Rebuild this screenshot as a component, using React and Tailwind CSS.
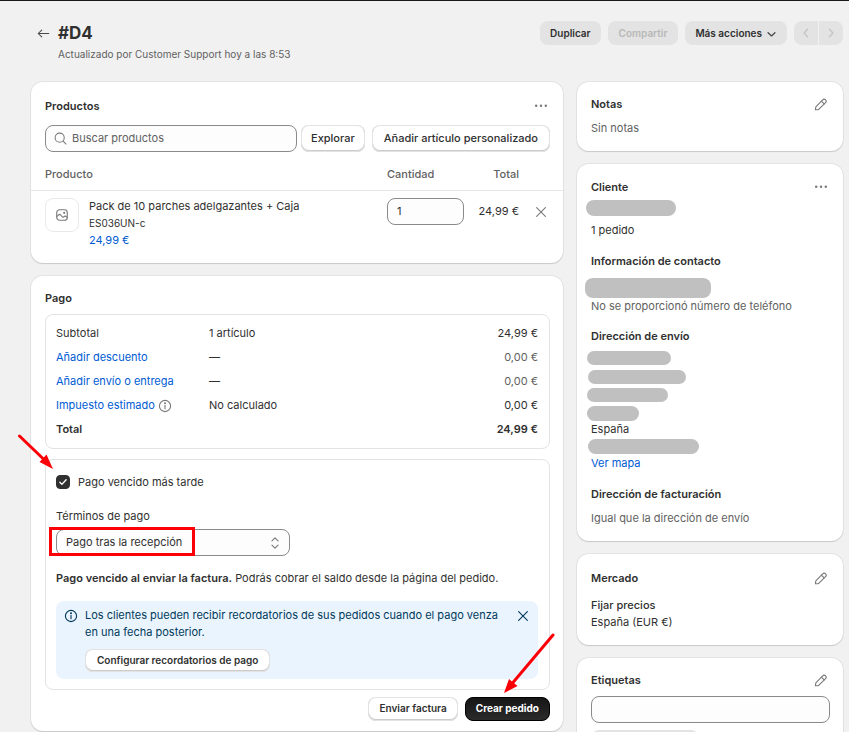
import { useState } from 'react';
import clsx from 'clsx';

const paymentRows = [
  { label: 'Subtotal', detail: '1 artículo', amount: '24,99 €' },
  { label: 'Añadir descuento', detail: '—', amount: '0,00 €', link: true, muted: true },
  { label: 'Añadir envío o entrega', detail: '—', amount: '0,00 €', link: true, muted: true },
  { label: 'Impuesto estimado', detail: 'No calculado', amount: '0,00 €', link: true, info: true },
  { label: 'Total', detail: '', amount: '24,99 €', strong: true },
];

const Icon = ({ className, children, viewBox = '0 0 16 16' }) => (
  <svg
    className={clsx('shrink-0', className)}
    viewBox={viewBox}
    fill="none"
    stroke="currentColor"
    strokeWidth="1.3"
    strokeLinecap="round"
    strokeLinejoin="round"
    aria-hidden="true"
  >
    {children}
  </svg>
);

const PencilIcon = () => (
  <Icon className="size-[14px] text-[#7a7a7a]">
    <path d="M1.600 13.400l.4-2.700a2 2 0 0 1 .6-1.200l7.400-7.400a2.200 2.200 0 0 1 3.200 3.200l-7.500 7.500a2 2 0 0 1-1.200.6z" />
    <path d="M8.400 3.600l3.200 3.200" />
  </Icon>
);

const DotsIcon = () => (
  <svg className="size-[14px] text-[#7a7a7a]" viewBox="0 0 16 16" fill="currentColor" aria-hidden="true">
    <circle cx="2.500" cy="6.500" r="1.400" />
    <circle cx="8" cy="6.500" r="1.400" />
    <circle cx="13.500" cy="6.500" r="1.400" />
  </svg>
);

const InfoIcon = ({ className }) => (
  <Icon className={className}>
    <circle cx="8" cy="8" r="6.400" />
    <path d="M8 7.500v3.700" />
    <circle cx="8" cy="4.900" r="0.500" fill="currentColor" />
  </Icon>
);

const CloseIcon = ({ className }) => (
  <Icon className={className}>
    <path d="M3 3l10 10M13 3L3 13" />
  </Icon>
);

const Card = ({ className, children }) => (
  <section
    className={clsx(
      'rounded-xl bg-white shadow-[0_1px_1px_#c9c9c9,0_0_0_1px_#e4e4e4]',
      className
    )}
  >
    {children}
  </section>
);

const CardHeader = ({ title, action, label }) => (
  <div className="flex h-[17px] items-center justify-between">
    <h2 className="font-semibold">{title}</h2>
    {action && (
      <button type="button" aria-label={label} className="mr-0.5 flex">
        {action}
      </button>
    )}
  </div>
);

const Button = ({ className, children }) => (
  <button
    type="button"
    className={clsx(
      'rounded-lg bg-white whitespace-nowrap shadow-[inset_0_0_0_1px_#e3e3e3,inset_0_-1px_0_1px_#cccccc]',
      className
    )}
  >
    {children}
  </button>
);

const Redacted = ({ className }) => <div className={clsx('rounded-lg bg-[#c0c0c0]', className)} />;

const PageHeader = () => (
  <header className="flex items-start justify-between pt-5">
    <div className="flex pl-[6px]">
      <button type="button" aria-label="Volver" className="flex h-6 w-[21px] items-center">
        <Icon className="size-[13px] text-[#4a4a4a]">
          <path d="M14.500 8H1.500M5.800 3.700L1.500 8l4.300 4.300" />
        </Icon>
      </button>
      <div>
        <h1 className="text-[17px] leading-6 font-bold">#D4</h1>
        <p className="mt-px text-[10px] leading-[17px] text-[#616161]">
          Actualizado por Customer Support hoy a las 8:53
        </p>
      </div>
    </div>
    <div className="flex gap-[7px] text-[10px] font-semibold">
      <button type="button" className="h-6 rounded-lg bg-[#e3e3e3] px-[10px]">Duplicar</button>
      <button type="button" disabled className="h-6 rounded-lg bg-[#e3e3e3] px-[11px] text-[#b8b8b8]">
        Compartir
      </button>
      <button type="button" className="flex h-6 items-center gap-1 rounded-lg bg-[#e3e3e3] px-[10px]">
        Más acciones
        <Icon className="size-[11px] text-[#4a4a4a]">
          <path d="M3 7l5 4.500L13 7" strokeWidth="2" />
        </Icon>
      </button>
      <div className="flex gap-px">
        <button type="button" disabled aria-label="Anterior" className="flex h-6 w-6 items-center justify-center rounded-l-lg bg-[#e3e3e3] text-[#c4c4c4]">
          <Icon className="size-3"><path d="M10 3L5.500 8l4.500 5" strokeWidth="1.800" /></Icon>
        </button>
        <button type="button" disabled aria-label="Siguiente" className="flex h-6 w-6 items-center justify-center rounded-r-lg bg-[#e3e3e3] text-[#c4c4c4]">
          <Icon className="size-3"><path d="M6 3l4.500 5L6 13" strokeWidth="1.800" /></Icon>
        </button>
      </div>
    </div>
  </header>
);

const ProductsCard = () => {
  const [quantity, setQuantity] = useState('1');

  return (
    <Card>
      <div className="pt-4 pr-[13px] pl-[14px]">
        <CardHeader title="Productos" action={<DotsIcon />} label="Más opciones de productos" />
        <div className="mt-[10px] flex">
          <label className="flex h-[27px] min-w-0 flex-1 items-center gap-[5px] rounded-lg border border-[#8a8a8a] bg-[#fdfdfd] px-2">
            <Icon className="size-[13px] text-[#7a7a7a]">
              <circle cx="7" cy="7" r="5.600" />
              <path d="M11.200 11.200l3.600 3.600" />
            </Icon>
            <input
              type="search"
              aria-label="Buscar productos"
              placeholder="Buscar productos"
              className="w-full min-w-0 bg-transparent outline-none placeholder:text-[#616161]"
            />
          </label>
          <Button className="ml-1 h-[27px] px-[10px] font-medium">Explorar</Button>
          <Button className="ml-[7px] h-[27px] px-3 font-medium">Añadir artículo personalizado</Button>
        </div>
      </div>

      <table className="w-full">
        <thead>
          <tr className="h-[38px] border-b border-[#e6e6e6] text-[#616161]">
            <th className="pt-2 pl-[14px] text-left font-medium">Producto</th>
            <th className="w-[77px] pt-2 text-left font-medium">Cantidad</th>
            <th className="w-[55px] pt-2 text-right font-medium">Total</th>
            <th className="w-11" aria-label="Acciones" />
          </tr>
        </thead>
        <tbody>
          <tr className="align-top">
            <td className="pt-[7px] pb-[14px] pl-[14px]">
              <div className="flex gap-[10px]">
                <div className="flex size-[34px] shrink-0 items-center justify-center rounded-lg border border-[#e9e9e9]">
                  <Icon className="size-[14px] text-[#7a7a7a]">
                    <rect x="2" y="2" width="12" height="12" rx="3.200" />
                    <path d="M2.300 9.500l2-1.800c.6-.5 1.300-.5 1.800 0l2.300 2.500c.5.500 1 .5 1.500.1l1-.8c.5-.4 1-.4 1.500 0l1.400 1.200" />
                    <circle cx="10.500" cy="5.500" r="0.600" fill="currentColor" />
                  </Icon>
                </div>
                <div>
                  <p>Pack de 10 parches adelgazantes + Caja</p>
                  <p className="text-[10px] leading-[17px]">ES036UN-c</p>
                  <a href="#precio" className="block text-[#005bd3]">24,99 €</a>
                </div>
              </div>
            </td>
            <td className="pt-[7px]">
              <input
                type="text"
                inputMode="numeric"
                aria-label="Cantidad"
                value={quantity}
                onChange={(e) => setQuantity(e.target.value)}
                className="block h-[27px] w-full rounded-lg border border-[#8a8a8a] bg-[#fdfdfd] px-[9px] outline-none"
              />
            </td>
            <td className="pt-3 text-right whitespace-nowrap">24,99 €</td>
            <td className="pt-[14px]">
              <button type="button" aria-label="Eliminar artículo" className="mx-auto block">
                <CloseIcon className="size-[14px] text-[#7a7a7a]" />
              </button>
            </td>
          </tr>
        </tbody>
      </table>
    </Card>
  );
};

const PaymentSummary = () => (
  <div className="mt-[7px] rounded-lg border border-[#e3e3e3] pt-[7px] pr-[11px] pb-[6px] pl-[10px]">
    <table className="w-full">
      <tbody>
        {paymentRows.map((row) => (
          <tr key={row.label} className={clsx('h-6', row.strong && 'font-semibold')}>
            <th
              scope="row"
              className={clsx('w-[153px] text-left whitespace-nowrap', row.strong ? 'font-semibold' : 'font-normal')}
            >
              <span className="flex items-center gap-[3px]">
                {row.link ? <a href="#pago" className="text-[#005bd3]">{row.label}</a> : row.label}
                {row.info && <InfoIcon className="size-[14px] text-[#7a7a7a]" />}
              </span>
            </th>
            <td>{row.detail}</td>
            <td className={clsx('text-right', row.muted && 'text-[#616161]')}>{row.amount}</td>
          </tr>
        ))}
      </tbody>
    </table>
  </div>
);

const PaymentTerms = () => {
  const [dueLater, setDueLater] = useState(true);

  return (
    <div className="relative mt-[10px] rounded-lg border border-[#e3e3e3] pt-[14px] pr-[11px] pb-[10px] pl-[10px]">
      <label className="flex items-center gap-2">
        <span className="grid size-[14px] place-items-center">
          <input
            type="checkbox"
            checked={dueLater}
            onChange={(e) => setDueLater(e.target.checked)}
            className="col-start-1 row-start-1 size-[14px] appearance-none rounded border border-[#8a8a8a] checked:border-[#303030] checked:bg-[#303030]"
          />
          {dueLater && (
            <Icon className="pointer-events-none col-start-1 row-start-1 size-[10px] text-white">
              <path d="M3 8.500l3.200 3.300L13 4.500" strokeWidth="2.200" />
            </Icon>
          )}
        </span>
        Pago vencido más tarde
      </label>

      <label htmlFor="terms" className="mt-[17px] block">Términos de pago</label>
      <div className="relative mt-1 w-[234px] max-w-full">
        <select
          id="terms"
          className="block h-[27px] w-full appearance-none rounded-lg border border-[#8a8a8a] bg-[#fdfdfd] pr-6 pl-[9px] outline-none"
        >
          <option>Pago tras la recepción</option>
          <option>Pago al preparar el pedido</option>
          <option>Neto 30</option>
        </select>
        <Icon className="pointer-events-none absolute top-[7px] right-2 size-[14px] text-[#7a7a7a]">
          <path d="M4.500 5.500L8 2.200l3.500 3.300M4.500 10.500L8 13.800l3.500-3.300" />
        </Icon>
        <div className="pointer-events-none absolute -top-0.5 -left-[7px] h-[29px] w-[146px] border-3 border-[#fb0007]" />
      </div>

      <p className="mt-[14px]">
        <strong className="font-semibold">Pago vencido al enviar la factura.</strong> Podrás cobrar el saldo desde la
        página del pedido.
      </p>

      <div className="mt-[14px] flex rounded-lg bg-[#eaf4ff] px-2 pt-[6px] pb-[7px] text-[#003a5a]">
        <InfoIcon className="mt-0.5 size-[14px]" />
        <div className="ml-[7px] flex-1">
          <p>Los clientes pueden recibir recordatorios de sus pedidos cuando el pago venza en una fecha posterior.</p>
          <Button className="mt-2 block h-[23px] px-3 text-[10px] font-semibold text-[#303030]">
            Configurar recordatorios de pago
          </Button>
        </div>
        <button type="button" aria-label="Cerrar aviso" className="mt-0.5 ml-3 self-start">
          <CloseIcon className="size-[14px]" />
        </button>
      </div>

      <svg className="pointer-events-none absolute -top-[26px] -left-[29px] h-9 w-9" viewBox="0 0 36 36" aria-hidden="true">
        <path d="M2.500 2L28 26.500" stroke="#fb0007" strokeWidth="3" strokeLinecap="round" />
        <path d="M36 35L22.500 28l7-7.500z" fill="#fb0007" />
      </svg>
    </div>
  );
};

const PaymentCard = () => (
  <Card className="pt-[14px] pr-[13px] pb-[10px] pl-[14px]">
    <CardHeader title="Pago" />
    <PaymentSummary />
    <PaymentTerms />
    <div className="relative mt-[7px] flex justify-end gap-[7px] text-[10px]">
      <Button className="h-6 px-[11px] font-semibold">Enviar factura</Button>
      <button
        type="button"
        className="h-6 rounded-lg border border-black bg-[#1c1c1c] bg-linear-to-b from-[#161616] to-[#2b2b2b] px-[10px] font-bold text-white"
      >
        Crear pedido
      </button>
      <svg className="pointer-events-none absolute -top-16 -right-[5px] h-[61px] w-[51px]" viewBox="0 0 51 61" aria-hidden="true">
        <path d="M49 2L9 49.500" stroke="#fb0007" strokeWidth="3" strokeLinecap="round" />
        <path d="M0 60L5 46l8.500 7z" fill="#fb0007" />
      </svg>
    </div>
  </Card>
);

const CustomerCard = () => (
  <Card className="pt-[15px] pr-[13px] pb-[14px] pl-[14px]">
    <CardHeader title="Cliente" action={<DotsIcon />} label="Más opciones de cliente" />
    <Redacted className="mt-1 -ml-[5px] h-4 w-[90px]" />
    <p className="mt-[6px]">1 pedido</p>

    <h3 className="mt-[14px] font-semibold">Información de contacto</h3>
    <Redacted className="mt-2 -ml-[6px] h-5 w-[126px]" />
    <p className="text-[#616161]">No se proporcionó número de teléfono</p>

    <h3 className="mt-[13px] font-semibold">Dirección de envío</h3>
    <Redacted className="mt-[6px] -ml-1 h-[14px] w-[84px]" />
    <Redacted className="mt-[5px] -ml-[3px] h-[14px] w-[98px]" />
    <Redacted className="mt-1 -ml-1 h-[14px] w-[81px]" />
    <Redacted className="mt-1 -ml-1 h-[15px] w-[52px]" />
    <p>España</p>
    <Redacted className="mt-px -ml-[3px] h-[15px] w-[111px]" />
    <a href="#mapa" className="mt-px inline-block text-[#005bd3]">Ver mapa</a>

    <h3 className="mt-[14px] font-semibold">Dirección de facturación</h3>
    <p className="mt-[7px] text-[#616161]">Igual que la dirección de envío</p>
  </Card>
);

const Sidebar = () => (
  <aside className="flex min-w-0 flex-col gap-[13px]">
    <Card className="pt-[14px] pr-[13px] pb-[14px] pl-[14px]">
      <CardHeader title="Notas" action={<PencilIcon />} label="Editar notas" />
      <p className="mt-[7px] text-[#616161]">Sin notas</p>
    </Card>

    <CustomerCard />

    <Card className="pt-4 pr-[13px] pb-[14px] pl-[14px]">
      <CardHeader title="Mercado" action={<PencilIcon />} label="Editar mercado" />
      <h3 className="mt-[10px] font-medium">Fijar precios</h3>
      <p>España (EUR €)</p>
    </Card>

    <Card className="pt-[14px] pr-[13px] pb-[14px] pl-[14px]">
      <CardHeader title="Etiquetas" action={<PencilIcon />} label="Editar etiquetas" />
      <input
        type="text"
        aria-label="Etiquetas"
        className="mt-[7px] block h-[27px] w-full rounded-lg border border-[#8a8a8a] bg-[#fdfdfd] px-[9px] outline-none"
      />
      <div className="mt-[7px] h-[17px] w-[108px] rounded-lg bg-[#e3e3e3]" />
    </Card>
  </aside>
);

const App = () => (
  <div className="h-screen overflow-hidden border-t border-[#1a1a1a] bg-[#f1f1f1] pr-[6px] pl-[31px] font-['Inter',sans-serif] text-[11px] leading-[17px] text-[#303030]">
    <PageHeader />
    <main className="mt-[19px] grid grid-cols-[2fr_1fr] items-start gap-[14px] pb-5">
      <div className="flex min-w-0 flex-col gap-[13px]">
        <ProductsCard />
        <PaymentCard />
      </div>
      <Sidebar />
    </main>
  </div>
);

export default App;
